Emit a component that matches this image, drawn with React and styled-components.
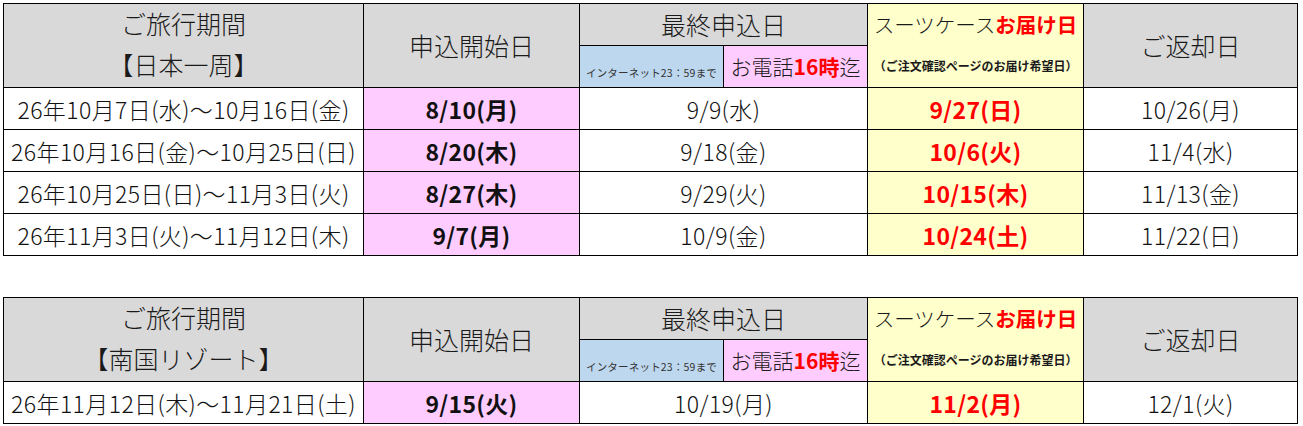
import React from "react";
import styled, { createGlobalStyle } from "styled-components";

const GlobalStyle = createGlobalStyle`
  body {
    margin: 0;
    padding: 3px;
    background: #fff;
    font-family: "Noto Sans CJK JP", "Noto Sans", sans-serif;
    color: #111;
  }
`;

const colors = {
  grey: "#d9d9d9",
  pink: "#ffccff",
  blue: "#bdd7ee",
  yellow: "#ffffcc",
  white: "#ffffff",
};

const tables = [
  {
    region: "【日本一周】",
    rows: [
      ["26年10月7日(水)～10月16日(金)", "8/10(月)", "9/9(水)", "9/27(日)", "10/26(月)"],
      ["26年10月16日(金)～10月25日(日)", "8/20(木)", "9/18(金)", "10/6(火)", "11/4(水)"],
      ["26年10月25日(日)～11月3日(火)", "8/27(木)", "9/29(火)", "10/15(木)", "11/13(金)"],
      ["26年11月3日(火)～11月12日(木)", "9/7(月)", "10/9(金)", "10/24(土)", "11/22(日)"],
    ],
  },
  {
    region: "【南国リゾート】",
    rows: [["26年11月12日(木)～11月21日(土)", "9/15(火)", "10/19(月)", "11/2(月)", "12/1(火)"]],
  },
];

const Page = styled.div`
  display: flex;
  flex-direction: column;
  gap: 41px;
`;

const Table = styled.table`
  border-collapse: collapse;
  table-layout: fixed;
  width: 1295px;

  td,
  th {
    border: 1px solid #000;
    padding: 0;
    text-align: center;
    vertical-align: middle;
    white-space: nowrap;
    overflow: hidden;
  }
`;

const Row = styled.tr`
  height: 42px;
`;

const Head = styled.th`
  background: ${(p) => colors[p.$bg || "grey"]};
  font-weight: 300;
  font-size: ${(p) => p.$size || 25}px;
  line-height: 1;
  color: #1a1a1a;
`;

const Cell = styled.td`
  background: ${(p) => colors[p.$bg || "white"]};
  font-size: 23px;
  font-weight: ${(p) => (p.$bold ? 700 : 300)};
  color: ${(p) => (p.$red ? "#ff0000" : "#111")};
  letter-spacing: ${(p) => (p.$bold ? "0.3px" : "0.4px")};
`;

const Line = styled.div`
  line-height: ${(p) => p.$lh || 42}px;
  font-size: ${(p) => p.$size || 25}px;
  font-weight: ${(p) => (p.$bold ? 700 : 300)};
`;

const Red = styled.span`
  color: #ff0000;
  font-weight: 700;
`;

const Tiny = styled.span`
  font-size: 10.5px;
  font-weight: 400;
  color: #333;
  letter-spacing: 0.2px;
`;

const ScheduleTable = ({ region, rows }) => (
  <Table>
    <colgroup>
      <col style={{ width: 360 }} />
      <col style={{ width: 216 }} />
      <col style={{ width: 144 }} />
      <col style={{ width: 144 }} />
      <col style={{ width: 216 }} />
      <col style={{ width: 214 }} />
    </colgroup>
    <tbody>
      <Row>
        <Head rowSpan={2}>
          <Line $lh={38}>ご旅行期間</Line>
          <Line $lh={45}>{region}</Line>
        </Head>
        <Head rowSpan={2}>申込開始日</Head>
        <Head colSpan={2}>最終申込日</Head>
        <Head rowSpan={2} $bg="yellow">
          <Line $size={20.5} $lh={40}>
            スーツケース<Red>お届け日</Red>
          </Line>
          <Line $size={12} $lh={43} $bold>
            （ご注文確認ページのお届け希望日）
          </Line>
        </Head>
        <Head rowSpan={2}>ご返却日</Head>
      </Row>
      <Row>
        <Head $bg="blue">
          <Tiny>インターネット23：59まで</Tiny>
        </Head>
        <Head $bg="pink" $size={21}>
          お電話<Red>16時</Red>迄
        </Head>
      </Row>
      {rows.map(([period, start, last, delivery, ret]) => (
        <Row key={period}>
          <Cell>{period}</Cell>
          <Cell $bg="pink" $bold>
            {start}
          </Cell>
          <Cell colSpan={2}>{last}</Cell>
          <Cell $bg="yellow" $bold $red>
            {delivery}
          </Cell>
          <Cell>{ret}</Cell>
        </Row>
      ))}
    </tbody>
  </Table>
);

const App = () => (
  <>
    <GlobalStyle />
    <Page>
      {tables.map((t) => (
        <ScheduleTable key={t.region} region={t.region} rows={t.rows} />
      ))}
    </Page>
  </>
);

export default App;
